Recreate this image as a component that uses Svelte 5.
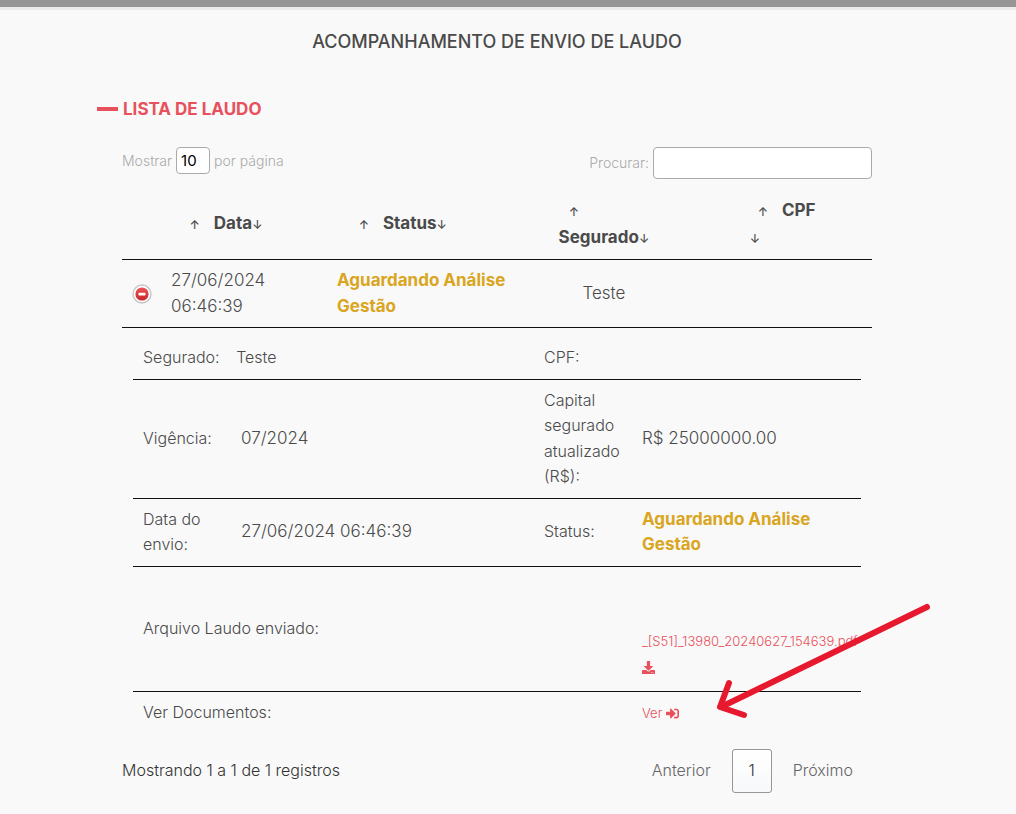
<script lang="ts">
	let pageSize = '10';
	let search = '';
	let open = true;

	const status = 'Aguardando Análise Gestão';
	const sentAt = '27/06/2024 06:46:39';
</script>

<div class="topbar"></div>

<main>
	<h1>ACOMPANHAMENTO DE ENVIO DE LAUDO</h1>

	<section class="list">
		<h2>LISTA DE LAUDO</h2>

		<div class="controls">
			<label class="length">
				Mostrar
				<select bind:value={pageSize}>
					<option>10</option>
					<option>25</option>
					<option>50</option>
				</select>
				por página
			</label>
			<label class="filter">
				Procurar:
				<input type="search" bind:value={search} />
			</label>
		</div>

		<table class="main-table">
			<colgroup>
				<col class="c-toggle" />
				<col class="c-date" />
				<col class="c-status" />
				<col class="c-name" />
				<col class="c-cpf" />
			</colgroup>
			<thead>
				<tr>
					<td></td>
					<th class="early"><span class="up">↑</span>Data<span class="down">↓</span></th>
					<th class="early"><span class="up">↑</span>Status<span class="down">↓</span></th>
					<th><span class="up wrapped">↑</span><br />Segurado<span class="down">↓</span></th>
					<th>
						<div class="cpf"><span class="up">↑</span>CPF<br /><span class="down">↓</span></div>
					</th>
				</tr>
			</thead>
			<tbody>
				<tr>
					<td class="toggle-cell">
						<button class="toggle" on:click={() => (open = !open)} aria-label="Detalhes" aria-expanded={open}>
							<svg viewBox="0 0 20 20" width="20" height="20">
								<defs>
									<linearGradient id="red" x1="0" y1="0" x2="0" y2="1">
										<stop offset="0" stop-color="#ea5555" />
										<stop offset="1" stop-color="#c8252b" />
									</linearGradient>
								</defs>
								<circle cx="10" cy="10" r="9" fill="#fff" stroke="#c6c6c6" stroke-width="1.4" />
								<circle cx="10" cy="10" r="6.6" fill="url(#red)" />
								<rect x="6.5" y="8.8" width="7" height="2.6" rx="0.6" fill="#fff" />
							</svg>
						</button>
					</td>
					<td>27/06/2024<br />06:46:39</td>
					<td class="status">{status}</td>
					<td class="center">Teste</td>
					<td></td>
				</tr>
			</tbody>
		</table>

		{#if open}
			<div class="details">
				<table>
					<colgroup>
						<col class="d-label" />
						<col class="d-value" />
						<col class="d-label" />
						<col />
					</colgroup>
					<tbody>
						<tr>
							<td class="label" colspan="2">Segurado: <span class="name">Teste</span></td>
							<td class="label">CPF:</td>
							<td></td>
						</tr>
						<tr>
							<td class="label">Vigência:</td>
							<td>07/2024</td>
							<td class="label">Capital segurado atualizado (R$):</td>
							<td>R$ 25000000.00</td>
						</tr>
						<tr>
							<td class="label">Data do envio:</td>
							<td>{sentAt}</td>
							<td class="label">Status:</td>
							<td class="status">{status}</td>
						</tr>
						<tr class="file">
							<td class="label" colspan="3">Arquivo Laudo enviado:</td>
							<td>
								<br /><br />
								<a href="#laudo">
									_[S51]_13980_20240627_154639.pdf<br />
									<svg viewBox="0 0 512 512" width="13" height="13" fill="currentColor" aria-hidden="true">
										<path d="M216 0h80c13.300 0 24 10.700 24 24v168h87.700c17.800 0 26.700 21.500 14.100 34.100L269.700 378.300c-7.500 7.500-19.800 7.500-27.300 0L90.100 226.100c-12.600-12.600-3.700-34.100 14.100-34.100H192V24c0-13.300 10.700-24 24-24zm296 376v112c0 13.300-10.700 24-24 24H24c-13.300 0-24-10.700-24-24V376c0-13.300 10.700-24 24-24h146.700l49 49c20.100 20.100 52.500 20.100 72.600 0l49-49H488c13.300 0 24 10.700 24 24zm-124 88c0-11-9-20-20-20s-20 9-20 20 9 20 20 20 20-9 20-20zm64 0c0-11-9-20-20-20s-20 9-20 20 9 20 20 20 20-9 20-20z" />
									</svg>
								</a>
							</td>
						</tr>
						<tr class="last">
							<td class="label" colspan="3">Ver Documentos:</td>
							<td>
								<a href="#documentos">Ver
									<svg viewBox="0 0 512 512" width="13" height="13" fill="currentColor" aria-hidden="true">
										<path d="M416 448h-84c-6.600 0-12-5.400-12-12v-40c0-6.600 5.400-12 12-12h84c17.700 0 32-14.300 32-32V160c0-17.700-14.300-32-32-32h-84c-6.600 0-12-5.400-12-12V76c0-6.600 5.400-12 12-12h84c53 0 96 43 96 96v192c0 53-43 96-96 96zm-47-209L201 71c-15-15-41-4.500-41 17v96H24c-13.300 0-24 10.700-24 24v96c0 13.300 10.700 24 24 24h136v96c0 21.500 26 32 41 17l168-168c9.300-9.400 9.300-24.600 0-34z" />
									</svg></a>
							</td>
						</tr>
					</tbody>
				</table>

				<svg class="pointer" viewBox="0 0 220 120" width="220" height="120" aria-hidden="true">
					<path d="M217 7L11 107M19 83L10 107L34 115" />
				</svg>
			</div>
		{/if}

		<footer>
			<p>Mostrando 1 a 1 de 1 registros</p>
			<nav>
				<button>Anterior</button>
				<button class="current">1</button>
				<button>Próximo</button>
			</nav>
		</footer>
	</section>
</main>

<style>
	:global(body) {
		background: #f9f9f9;
		color: #4a4a4a;
		font: 300 17px/150% Inter, sans-serif;
	}

	.topbar {
		height: 7px;
		background: #969696;
		border-bottom: 3px solid #ececec;
	}

	main {
		padding: 19px 22px 20px 0;
	}

	h1 {
		margin: 0 0 42px;
		font-size: 18px;
		font-weight: 500;
		text-align: center;
	}

	.list {
		max-width: 750px;
		margin: 0 auto;
	}

	h2 {
		display: flex;
		align-items: center;
		gap: 5px;
		margin: 0 0 25px -25px;
		color: #e8505b;
		font-size: 17px;
		font-weight: 700;
	}

	h2::before {
		content: '';
		width: 21px;
		height: 4px;
		background: #e8505b;
	}

	.controls {
		display: flex;
		justify-content: space-between;
		align-items: flex-start;
		color: #aaa;
		font-size: 14px;
	}

	.controls label {
		display: flex;
		align-items: center;
		gap: 4px;
	}

	select,
	input {
		box-sizing: border-box;
		margin: 0;
		border: 1px solid #aaa;
		border-radius: 4px;
		background: #fff;
		color: #000;
		font: 400 15px/20px Inter, sans-serif;
	}

	select {
		appearance: none;
		width: 34px;
		height: 27px;
		padding: 0 4px;
	}

	input {
		width: 219px;
		height: 32px;
		padding: 4px;
	}

	table {
		width: 100%;
		table-layout: fixed;
		border-collapse: collapse;
	}

	td,
	th {
		padding: 8px 10px;
		border-bottom: 1px solid #111;
		text-align: left;
		vertical-align: middle;
	}

	.main-table {
		margin-top: 9px;
	}

	.main-table th {
		padding: 10px 0 8px;
		font-weight: 700;
		text-align: center;
	}

	.main-table th.early {
		padding-right: 36px;
	}

	.main-table td.status {
		padding-right: 0;
	}

	.c-toggle {
		width: 39px;
	}

	.c-date {
		width: 166px;
	}

	.c-status {
		width: 25%;
	}

	.up,
	.down {
		font-size: 12px;
		font-weight: 500;
	}

	.up {
		margin-right: 14px;
	}

	.up.wrapped {
		margin-right: 60px;
	}

	.cpf {
		display: inline-block;
		text-align: left;
		text-indent: 8px;
	}

	.center {
		text-align: center;
	}

	.toggle-cell {
		padding: 0;
		text-align: center;
	}

	.toggle {
		display: block;
		margin: 0 auto;
		padding: 0;
		border: 0;
		background: none;
		cursor: pointer;
	}

	.toggle svg {
		display: block;
	}

	td.status {
		color: #daa520;
		font-weight: 700;
	}

	.details {
		position: relative;
		margin: 9px 11px 0;
	}

	.d-label {
		width: 98px;
	}

	.d-value {
		width: 303px;
	}

	.label {
		font-size: 16px;
	}

	.name {
		margin-left: 12px;
	}

	.file td {
		padding: 10px 0 10px 10px;
	}

	.last td {
		border-bottom: 0;
	}

	a {
		color: #e8505b;
		font-size: 13px;
		text-decoration: none;
	}

	a svg {
		vertical-align: -2px;
	}

	.pointer {
		position: absolute;
		right: -69px;
		bottom: 14px;
		pointer-events: none;
	}

	.pointer path {
		fill: none;
		stroke: #e6192e;
		stroke-width: 6;
		stroke-linecap: round;
		stroke-linejoin: round;
	}

	footer {
		display: flex;
		justify-content: space-between;
		align-items: center;
		margin-top: 15px;
		color: #333;
		font-size: 16px;
	}

	footer p {
		margin: 0;
	}

	nav {
		display: flex;
		gap: 2px;
	}

	nav button {
		box-sizing: border-box;
		min-width: 40px;
		height: 44px;
		padding: 0 18px;
		border: 1px solid transparent;
		border-radius: 3px;
		background: none;
		color: #666;
		font: inherit;
		cursor: pointer;
	}

	nav .current {
		padding: 0;
		border-color: #979797;
		background: linear-gradient(#fff, #f7f9fa);
		color: #333;
	}
</style>
